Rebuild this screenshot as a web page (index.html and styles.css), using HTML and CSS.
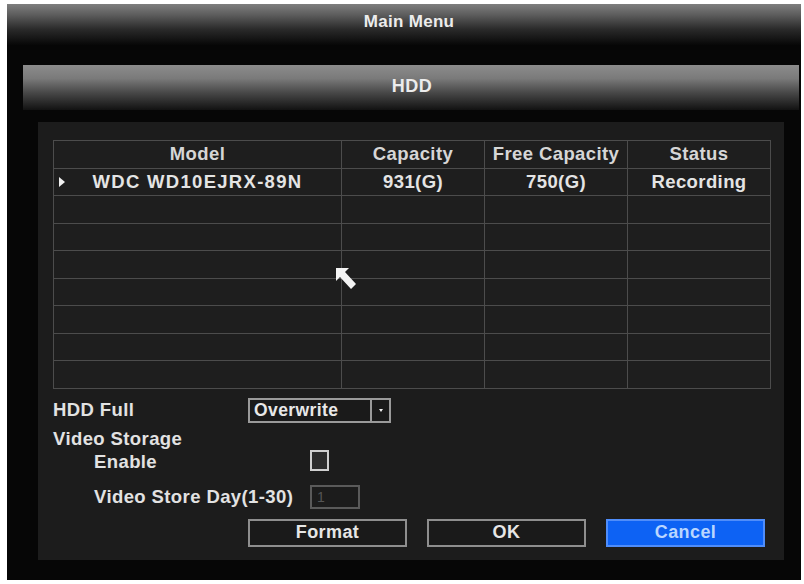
FILE: index.html
```html
<!DOCTYPE html>
<html>
<head>
<meta charset="utf-8">
<link rel="stylesheet" href="styles.css">
</head>
<body>
<div class="frame">
  <div class="title-bar">Main Menu</div>
  <div class="hdd-bar">HDD</div>
  <div class="panel">
    <table class="grid">
      <tr class="head">
        <td class="c1">Model</td><td class="c2">Capacity</td><td class="c3">Free Capacity</td><td class="c4">Status</td>
      </tr>
      <tr>
        <td class="sel"><span class="marker"></span><span class="model">WDC WD10EJRX-89N</span></td><td>931(G)</td><td>750(G)</td><td>Recording</td>
      </tr>
      <tr><td></td><td></td><td></td><td></td></tr>
      <tr><td></td><td></td><td></td><td></td></tr>
      <tr><td></td><td></td><td></td><td></td></tr>
      <tr><td></td><td></td><td></td><td></td></tr>
      <tr><td></td><td></td><td></td><td></td></tr>
      <tr><td></td><td></td><td></td><td></td></tr>
      <tr><td></td><td></td><td></td><td></td></tr>
    </table>

    <div class="row row-full">
      <span class="label lbl-main">HDD Full</span>
      <div class="select"><span class="select-text">Overwrite</span><span class="select-btn"><span class="dot"></span></span></div>
    </div>
    <div class="row row-storage">
      <span class="label">Video Storage</span>
    </div>
    <div class="row row-enable">
      <span class="label lbl-sub">Enable</span>
      <span class="checkbox"></span>
    </div>
    <div class="row row-day">
      <span class="label lbl-sub">Video Store Day(1-30)</span>
      <span class="input">1</span>
    </div>
    <div class="row row-buttons">
      <span class="btn">Format</span>
      <span class="btn">OK</span>
      <span class="btn btn-active">Cancel</span>
    </div>
  </div>
  <svg class="cursor" width="23" height="24" viewBox="0 0 23 24">
    <path d="M1 1 L14 1 L10 5 L21 17 L16 22 L5 10 L1 14 Z" fill="#f4f4f4"/>
  </svg>
</div>
</body>
</html>
```

FILE: styles.css
```css
html, body {
  margin: 0;
  padding: 0;
  background: #ffffff;
}

body {
  width: 804px;
  height: 584px;
  overflow: hidden;
  font-family: "Liberation Sans", Arial, sans-serif;
}

.frame {
  position: relative;
  margin: 4px 3px 0 7px;
  width: 794px;
  height: 576px;
  background: #060606;
  display: flex;
  flex-direction: column;
  box-sizing: border-box;
}

.title-bar {
  height: 42px;
  background: linear-gradient(to bottom, #7e7e7e 0%, #5e5e5e 25%, #2a2a2a 60%, #050505 100%);
  color: #ececec;
  font-weight: bold;
  font-size: 17px;
  display: flex;
  align-items: center;
  justify-content: center;
  padding-left: 10px;
  padding-bottom: 6px;
  box-sizing: border-box;
  letter-spacing: 0.3px;
}

.hdd-bar {
  margin: 19px 2px 0 16px;
  height: 45px;
  background: linear-gradient(to bottom, #8c8c8c 0%, #7a7a7a 30%, #4a4a4a 60%, #121212 100%);
  color: #ececec;
  font-weight: bold;
  font-size: 18px;
  letter-spacing: 0.5px;
  display: flex;
  align-items: center;
  justify-content: center;
  padding-bottom: 3px;
  padding-left: 2px;
  box-sizing: border-box;
}

.panel {
  margin: 12px 17px 0 31px;
  height: 438px;
  background: #1c1c1c;
  padding: 18px 14px 0 15px;
  box-sizing: border-box;
  color: #e2e2e2;
  font-weight: bold;
  font-size: 18.5px;
  letter-spacing: 0.4px;
}

.grid {
  border-collapse: collapse;
  width: 717px;
  table-layout: fixed;
  background: #1e1e1e;
}

.grid td {
  border: 1px solid #4c4c4c;
  height: 26.5px;
  padding: 0;
  text-align: center;
  line-height: 20px;
  color: #e4e4e4;
}

.grid .c1 { width: 287px; }
.grid .c2 { width: 142px; }
.grid .c3 { width: 142px; }
.grid .c4 { width: 142px; }

.grid .head td {
  color: #d6d6d6;
}

.grid .sel {
  position: relative;
}

.model {
  letter-spacing: 1.3px;
}

.marker {
  position: absolute;
  left: 5px;
  top: 8px;
  width: 0;
  height: 0;
  border-top: 5px solid transparent;
  border-bottom: 5px solid transparent;
  border-left: 6px solid #f0f0f0;
}

.row {
  display: flex;
  align-items: center;
}

.label {
  color: #e2e2e2;
  white-space: nowrap;
}

.lbl-main {
  width: 195px;
}

.lbl-sub {
  padding-left: 41px;
  width: 216px;
}

.row-full {
  margin-top: 9px;
  height: 25px;
}

.select {
  width: 143px;
  height: 25px;
  border: 2px solid #9a9a9a;
  box-sizing: border-box;
  display: flex;
  background: #1a1a1a;
}

.select-text {
  flex: 1;
  padding-left: 4px;
  line-height: 20px;
  font-size: 17.5px;
  color: #e8e8e8;
}

.select-btn {
  width: 17px;
  border-left: 2px solid #9a9a9a;
  display: flex;
  align-items: center;
  justify-content: center;
}

.dot {
  width: 0;
  height: 0;
  border-left: 2.5px solid transparent;
  border-right: 2.5px solid transparent;
  border-top: 3px solid #f0f0f0;
}

.row-storage {
  margin-top: 5px;
  height: 22px;
}

.row-enable {
  height: 22px;
  margin-top: 1px;
}

.checkbox {
  width: 19px;
  height: 21px;
  border: 2px solid #d0d0d0;
  box-sizing: border-box;
  background: #2c2c2c;
  margin-top: -3px;
}

.row-day {
  margin-top: 12px;
  height: 24px;
}

.input {
  width: 50px;
  height: 24px;
  border: 2px solid #5a5a5a;
  box-sizing: border-box;
  color: #555;
  font-size: 14px;
  font-weight: normal;
  line-height: 20px;
  padding-left: 5px;
}

.row-buttons {
  margin-top: 10px;
  padding-left: 195px;
  gap: 20px;
}

.btn {
  width: 159px;
  height: 28px;
  border: 2px solid #8e8e8e;
  box-sizing: border-box;
  background: #1a1a1a;
  color: #e6e6e6;
  display: flex;
  align-items: center;
  justify-content: center;
  font-size: 18px;
}

.btn-active {
  background: #0d62f4;
  border-color: #4f8dfa;
  color: #b9d6ff;
}

.cursor {
  position: absolute;
  left: 328px;
  top: 263px;
}
```
